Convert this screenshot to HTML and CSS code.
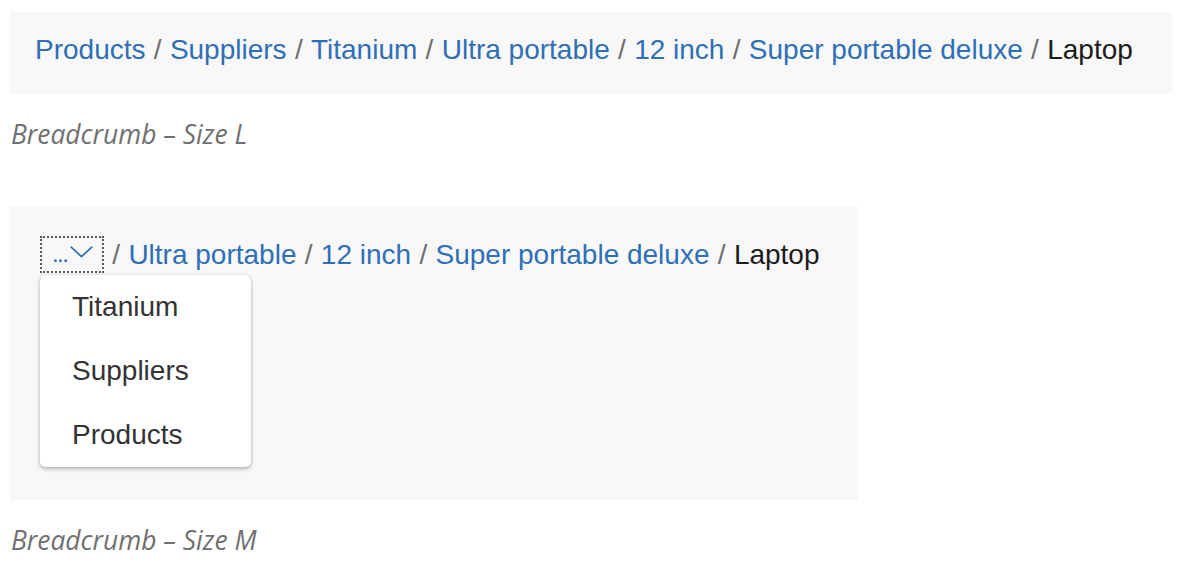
FILE: index.html
```html
<!DOCTYPE html>
<html lang="en">
<head>
<meta charset="utf-8">
<title>Breadcrumb</title>
<link rel="stylesheet" href="styles.css">
</head>
<body>
<div class="page">
  <section class="demo demo-l">
    <nav class="crumbs">
      <a class="crumb" href="#">Products</a><span class="sep">/</span><a class="crumb" href="#">Suppliers</a><span class="sep">/</span><a class="crumb" href="#">Titanium</a><span class="sep">/</span><a class="crumb" href="#">Ultra portable</a><span class="sep">/</span><a class="crumb" href="#">12 inch</a><span class="sep">/</span><a class="crumb" href="#">Super portable deluxe</a><span class="sep">/</span><span class="current">Laptop</span>
    </nav>
  </section>
  <p class="caption">Breadcrumb – Size L</p>

  <section class="demo demo-m">
    <nav class="crumbs">
      <button class="overflow" type="button"><span class="dots">...</span><svg class="chev" width="23" height="12" viewBox="0 0 23 12"><path d="M1.2 1.2 L11.5 10.6 L21.8 1.2" fill="none" stroke="#2f6fb6" stroke-width="1.7" stroke-linejoin="round" stroke-linecap="round"/></svg></button><span class="sep">/</span><a class="crumb" href="#">Ultra portable</a><span class="sep">/</span><a class="crumb" href="#">12 inch</a><span class="sep">/</span><a class="crumb" href="#">Super portable deluxe</a><span class="sep">/</span><span class="current">Laptop</span>
    </nav>
    <ul class="menu">
      <li class="menu-item">Titanium</li>
      <li class="menu-item">Suppliers</li>
      <li class="menu-item">Products</li>
    </ul>
  </section>
  <p class="caption caption-last">Breadcrumb – Size M</p>
</div>
</body>
</html>
```
FILE: styles.css
```css
html, body {
  margin: 0;
  padding: 0;
  background: #ffffff;
}

.page {
  padding: 12px 16px 0 10px;
  font-family: "Liberation Sans", Arial, sans-serif;
}

.demo {
  background: #f8f8f8;
}

.demo-l {
  padding: 22px 26px 28px 25px;
}

.demo-m {
  width: 848px;
  box-sizing: border-box;
  padding: 30px 30px 33px 30px;
}

.crumbs {
  display: flex;
  align-items: center;
  font-size: 28px;
  line-height: 32px;
  white-space: nowrap;
}

.crumb {
  color: #2f6fb6;
  text-decoration: none;
}

.sep {
  color: #6e6e6e;
  padding: 0 8.3px;
}

.current {
  color: #1c1c1c;
}

.overflow {
  display: flex;
  align-items: flex-end;
  width: 64px;
  height: 37px;
  box-sizing: border-box;
  margin: 0;
  padding: 0 0 5px 10px;
  background: transparent;
  border: 2px dotted #5a5a5a;
  font-family: inherit;
  color: #2f6fb6;
  cursor: pointer;
}

.dots {
  display: block;
  font-size: 24px;
  line-height: 1;
  letter-spacing: -1.6px;
}

.chev {
  display: block;
  margin: 0 0 8px 3px;
}

.menu {
  list-style: none;
  margin: 2px 0 0 0;
  padding: 0;
  width: 211px;
  background: #ffffff;
  border-radius: 5px;
  box-shadow: 0 2px 4px rgba(0, 0, 0, 0.28), 0 0 1px rgba(0, 0, 0, 0.25);
}

.menu-item {
  height: 64px;
  display: flex;
  align-items: center;
  padding-left: 32px;
  font-size: 28px;
  color: #333333;
}

.caption {
  margin: 0;
  padding: 22px 0 0 1px;
  height: 112px;
  box-sizing: border-box;
  font-family: "Open Sans", sans-serif;
  font-style: italic;
  font-weight: 400;
  font-size: 26.4px;
  line-height: 36px;
  color: #707070;
}

.caption-last {
  height: 62px;
}
```
